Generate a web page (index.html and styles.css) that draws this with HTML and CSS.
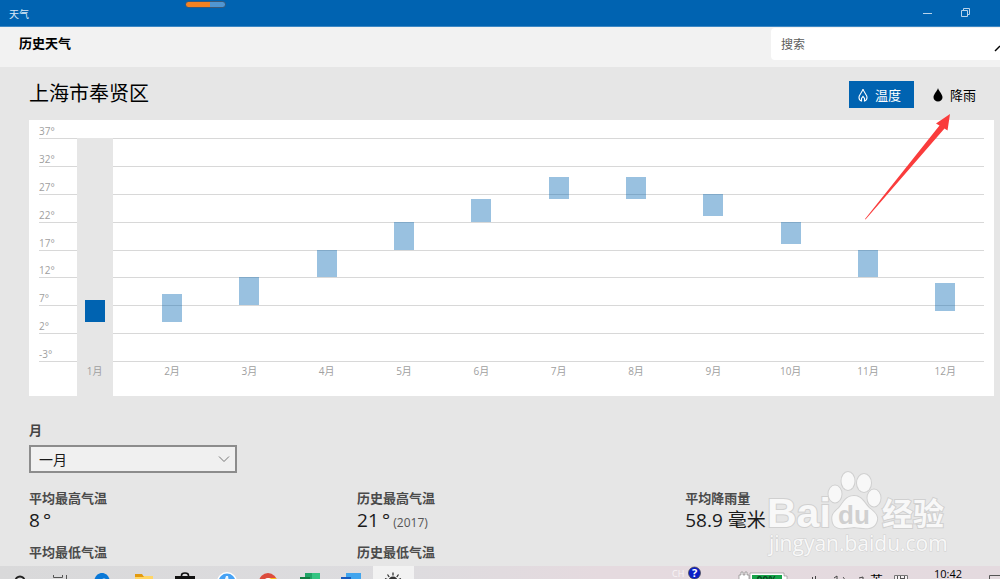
FILE: index.html
```html
<!DOCTYPE html>
<html lang="zh-CN">
<head>
    <meta charset="UTF-8">
    <meta name="viewport" content="width=device-width, initial-scale=1.0">
    <title>天气</title>
    <link rel="stylesheet" href="styles.css">
</head>
<body>
    <div class="titlebar">
        <span class="app-name">天气</span>
        <div class="drag-handle"></div>
        <div class="window-buttons">
            <button aria-label="最小化">
                <svg width="10" height="10" viewBox="0 0 10 10"><path d="M0 5.500h9"/></svg>
            </button>
            <button aria-label="还原">
                <svg width="10" height="10" viewBox="0 0 10 10"><path d="M.5 2.500h6v6h-6zM2.500 2V.5h6v6H7"/></svg>
            </button>
        </div>
    </div>

    <header>
        <h1>历史天气</h1>
        <div class="search">
            <input type="text" placeholder="搜索" aria-label="搜索">
            <svg width="6" height="16" viewBox="0 0 6 16"><path d="M1 15l5-5"/></svg>
        </div>
    </header>

    <main>
        <div class="location-row">
            <h2>上海市奉贤区</h2>
            <div class="tabs">
                <button class="tab active">
                    <svg width="12" height="16" viewBox="0 0 12 16"><path d="M6 2C5.500 5 2 7.500 2 10.500c0 1.800 1 3 2.500 3.500V11.500L6 9.500l1.500 2V14C9 13.500 10 12.300 10 10.500 10 7.500 6.500 5 6 2z" fill="none" stroke="#fff" stroke-width="1.100"/></svg>
                    温度
                </button>
                <button class="tab">
                    <svg width="12" height="16" viewBox="0 0 12 16"><path d="M6 1C5.300 4 1.500 7 1.500 10.300a4.500 4.300 0 0 0 9 0C10.500 7 6.700 4 6 1z"/></svg>
                    降雨
                </button>
            </div>
        </div>

        <div class="chart">
            <ul class="axis">
                <li>37°</li>
                <li>32°</li>
                <li>27°</li>
                <li>22°</li>
                <li>17°</li>
                <li>12°</li>
                <li>7°</li>
                <li>2°</li>
                <li>-3°</li>
            </ul>
            <!-- one grid row per degree, from 37° down to -3° -->
            <div class="months">
                <div class="month selected"><div class="plot"><div class="bar" style="grid-row: 30 / 34"></div></div><span>1月</span></div>
                <div class="month"><div class="plot"><div class="bar" style="grid-row: 29 / 34"></div></div><span>2月</span></div>
                <div class="month"><div class="plot"><div class="bar" style="grid-row: 26 / 31"></div></div><span>3月</span></div>
                <div class="month"><div class="plot"><div class="bar" style="grid-row: 21 / 26"></div></div><span>4月</span></div>
                <div class="month"><div class="plot"><div class="bar" style="grid-row: 16 / 21"></div></div><span>5月</span></div>
                <div class="month"><div class="plot"><div class="bar" style="grid-row: 12 / 16"></div></div><span>6月</span></div>
                <div class="month"><div class="plot"><div class="bar" style="grid-row: 8 / 12"></div></div><span>7月</span></div>
                <div class="month"><div class="plot"><div class="bar" style="grid-row: 8 / 12"></div></div><span>8月</span></div>
                <div class="month"><div class="plot"><div class="bar" style="grid-row: 11 / 15"></div></div><span>9月</span></div>
                <div class="month"><div class="plot"><div class="bar" style="grid-row: 16 / 20"></div></div><span>10月</span></div>
                <div class="month"><div class="plot"><div class="bar" style="grid-row: 21 / 26"></div></div><span>11月</span></div>
                <div class="month"><div class="plot"><div class="bar" style="grid-row: 27 / 32"></div></div><span>12月</span></div>
            </div>
        </div>

        <div class="month-picker">
            <label for="month">月</label>
            <div class="select-box">
                <select id="month">
                    <option>一月</option>
                </select>
                <svg width="12" height="8" viewBox="0 0 12 8"><path d="M1 1.500l5 5 5-5"/></svg>
            </div>
        </div>

        <dl class="stats">
            <div>
                <dt>平均最高气温</dt>
                <dd>8&thinsp;°</dd>
            </div>
            <div>
                <dt>历史最高气温</dt>
                <dd>21&thinsp;°&thinsp;<small>(2017)</small></dd>
            </div>
            <div>
                <dt>平均降雨量</dt>
                <dd>58.9 毫米</dd>
            </div>
            <div>
                <dt>平均最低气温</dt>
            </div>
            <div>
                <dt>历史最低气温</dt>
            </div>
        </dl>
    </main>

    <footer class="taskbar">
        <nav class="apps">
            <a href="#" aria-label="搜索">
                <svg width="24" height="24" viewBox="0 0 24 24"><circle cx="11" cy="15" r="4.500" fill="none" stroke="#222" stroke-width="2"/></svg>
            </a>
            <a href="#" aria-label="任务视图">
                <svg width="24" height="24" viewBox="0 0 24 24"><path d="M3.500 9v2.500h9V9M16.500 9v12M3.500 14.500h9v6h-9z" fill="none" stroke="#555"/></svg>
            </a>
            <a href="#" aria-label="Edge">
                <svg width="24" height="24" viewBox="0 0 24 24"><path d="M3 17c0-6 3.500-10 8-10s8 4 8 10z" fill="#0a78d7"/><path d="M9.500 16c0-2 1.500-3.500 3.500-3.500s3.500 1.500 3.500 3.500z" fill="#fff"/></svg>
            </a>
            <a href="#" aria-label="文件">
                <svg width="24" height="24" viewBox="0 0 24 24"><path d="M2 10h18v10H2z" fill="#ffd666"/><path d="M2 8h7l2 3H2z" fill="#e29a10"/></svg>
            </a>
            <a href="#" aria-label="商店">
                <svg width="24" height="24" viewBox="0 0 24 24"><path d="M1 10h20v10H1z" fill="#111"/><path d="M7.500 12V9.500c0-1.500 1.500-2.500 3.500-2.500s3.500 1 3.500 2.500V12" fill="none" stroke="#111" stroke-width="1.600"/></svg>
            </a>
            <a href="#" aria-label="浏览器">
                <svg width="24" height="24" viewBox="0 0 24 24"><circle cx="11" cy="16" r="10" fill="#fff"/><circle cx="11" cy="16" r="8.500" fill="#46a2f5"/><path d="M10 10h2l1 6H8z" fill="#eaf5ff"/></svg>
            </a>
            <a href="#" aria-label="Chrome">
                <svg width="24" height="24" viewBox="0 0 24 24"><circle cx="11" cy="16" r="9" fill="#dc4c3e"/><path d="M11 12h8c1 2 1 6 0 8h-8z" fill="#fbc116"/><circle cx="11" cy="16" r="4" fill="#fff"/></svg>
            </a>
            <a href="#" aria-label="Excel">
                <svg width="24" height="24" viewBox="0 0 24 24"><path d="M7 7h7v12H7z" fill="#20a366"/><path d="M14 7h8v12h-8z" fill="#33c481"/><path d="M2 11h10v9H2z" fill="#107c41"/></svg>
            </a>
            <a href="#" aria-label="Word">
                <svg width="24" height="24" viewBox="0 0 24 24"><path d="M6 7h15v12H6z" fill="#41a5ee"/><path d="M1 11h10v9H1z" fill="#185abd"/></svg>
            </a>
            <a href="#" class="current" aria-label="天气">
                <svg width="24" height="24" viewBox="0 0 24 24"><circle cx="12" cy="15" r="4.500" fill="#333"/><path d="M12 6.500v3M6.500 8.500l1.700 2.500M17.500 8.500l-1.700 2.500M4 12.500l2.500 1M20 12.500l-2.500 1" stroke="#333" stroke-width="1.300"/></svg>
            </a>
        </nav>
        <div class="tray">
            <span class="lang">CH</span>
            <svg width="14" height="14" viewBox="0 0 14 14"><circle cx="6.500" cy="7" r="6" fill="#0a1ec8" stroke="#444" stroke-width=".7"/><text x="6.500" y="11" text-anchor="middle" font-size="11" font-weight="bold" fill="#fff">?</text></svg>
            <svg class="battery" width="50" height="24" viewBox="0 0 50 24"><path d="M1 9h2V6h2v3h2V6h2v3h2v8H1z" fill="#fff" stroke="#777" stroke-width=".6"/><path d="M12 7h34v3h3v8h-3v4H12z" fill="#fff" stroke="#888" stroke-width=".6"/><path d="M14 9h30v12H14z" fill="#16a34a"/><text x="29" y="18" text-anchor="middle" font-size="10" font-weight="bold" fill="#064a1e">99%</text></svg>
            <svg width="62" height="24" viewBox="0 0 62 24"><path d="M4.500 11v6M7.500 10v7M26 12l3-2v7M35 11c2 2 2 4 0 6M51 12l4-1v5" fill="none" stroke="#444"/></svg>
            <span class="ime">英</span>
            <svg width="14" height="24" viewBox="0 0 14 24"><path d="M.5 9.500h13v9H.5z" fill="#f5f0f2" stroke="#777"/><path d="M3.500 10v3M6.500 10v3M10.500 10v3M6.500 12.500h4" stroke="#555"/></svg>
            <time>10:42</time>
            <svg width="11" height="24" viewBox="0 0 11 24"><path d="M11 9.500H.5v11H11" fill="none" stroke="#555"/></svg>
        </div>
    </footer>

    <svg class="arrow" width="90" height="108" viewBox="0 0 90 108"><path d="M2 106L76.500 12.500 73 10.500 87 1 84.500 17.500 81.500 15.500 2.500 106.500z" fill="#fa3c3c"/></svg>

    <svg class="watermark" width="184" height="94" viewBox="0 0 184 94">
        <g class="mark">
            <text x="1" y="57" class="brand">Bai</text>
            <ellipse cx="82" cy="11" rx="6.500" ry="9"/>
            <ellipse cx="98" cy="13" rx="7" ry="9"/>
            <ellipse cx="69" cy="24" rx="6.500" ry="8.500"/>
            <ellipse cx="108" cy="28" rx="6.500" ry="8.500"/>
            <path d="M88 26c8 0 10 7 15 12 7 5 10 9 7 15-3 6-9 6-22 4-13 2-19 2-21-4-2-7 0-10 6-15 5-6 7-12 15-12z"/>
            <text x="116" y="55" class="name">经验</text>
            <text x="3" y="81" class="site">jingyan.baidu.com</text>
        </g>
        <text x="88" y="54" text-anchor="middle" class="du">du</text>
    </svg>
</body>
</html>
```

FILE: styles.css
```css
:root {
    --accent-color: #0063b1;
    --page-color: #e6e6e6;
    --header-color: #f2f2f2;
    --muted-color: #a0a0a0;
    --line-color: #d8d8d8;
}

* {
    margin: 0;
    padding: 0;
    box-sizing: border-box;
}

body {
    display: flex;
    flex-direction: column;
    position: relative;
    height: 100vh;
    overflow: hidden;
    font-family: "Open Sans", "Noto Sans CJK SC", sans-serif;
    font-size: 13px;
    color: #000;
    background-color: var(--page-color);
}

button {
    border: none;
    background: none;
    font: inherit;
    color: inherit;
}

svg {
    display: block;
}

.titlebar {
    display: flex;
    justify-content: space-between;
    align-items: center;
    flex: none;
    height: 27px;
    padding: 0 29px 0 9px;
    background-color: var(--accent-color);
    border-bottom: 1px solid #3d88c4;
    color: #dbe9f5;
}

.app-name {
    font-size: 10px;
}

.drag-handle {
    position: absolute;
    top: 1px;
    left: 185px;
    width: 41px;
    height: 7px;
    border: 1px solid #3c5a78;
    border-radius: 4px;
    background: linear-gradient(to right, #f58220 62%, #5096d2 62%);
}

.window-buttons {
    display: flex;
    gap: 28px;
}

.window-buttons path {
    fill: none;
    stroke: #b8d3ea;
}

header {
    display: flex;
    justify-content: space-between;
    align-items: flex-start;
    flex: none;
    height: 40px;
    padding-top: 1px;
    padding-left: 19px;
    background-color: var(--header-color);
}

h1 {
    font-size: 13px;
    font-weight: 700;
    line-height: 30px;
}

.search {
    display: flex;
    align-items: center;
    width: 229px;
    height: 32px;
    padding-left: 10px;
    border-radius: 4px 0 0 4px;
    background-color: #fff;
}

.search input {
    flex: 1;
    min-width: 0;
    border: none;
    outline: none;
    background: none;
    font: inherit;
    font-size: 12px;
}

.search input::placeholder {
    color: #5c5c5c;
}

.search path {
    stroke: #000;
    stroke-width: 1.5;
}

main {
    flex: 1;
    min-height: 0;
    overflow: hidden;
    padding: 14px 6px 0 29px;
}

.location-row {
    display: flex;
    justify-content: space-between;
    height: 27px;
    margin-bottom: 12px;
}

h2 {
    font-size: 20px;
    font-weight: 400;
    line-height: 26px;
}

.tabs {
    display: flex;
    gap: 10px;
    padding-right: 18px;
}

.tab {
    display: flex;
    align-items: center;
    gap: 6px;
    height: 27px;
    padding: 0 0 0 8px;
    line-height: 20px;
}

.tab.active {
    padding-right: 13px;
    background-color: var(--accent-color);
    color: #fff;
}

/* axis lines and month columns share one grid cell */
.chart {
    display: grid;
    height: 276px;
    background-color: #fff;
}

.axis,
.months {
    grid-area: 1 / 1;
}

.axis {
    display: grid;
    grid-template-rows: 19px repeat(8, 1fr);
    height: 242px;
    padding: 0 10px;
    list-style: none;
    font-size: 10px;
    color: var(--muted-color);
}

.axis li {
    display: flex;
    align-items: flex-end;
    line-height: 14px;
    border-bottom: 1px solid var(--line-color);
}

.months {
    display: grid;
    grid-template-columns: repeat(12, 1fr);
    padding: 18px 10px 0 27px;
}

.month {
    justify-self: center;
    width: 36px;
    font-size: 10px;
    line-height: 20px;
    text-align: center;
    color: var(--muted-color);
}

.month.selected {
    background-color: var(--page-color);
}

.plot {
    display: grid;
    grid-template-rows: repeat(40, 1fr);
    justify-content: center;
    height: 223px;
}

.bar {
    width: 20px;
    background-color: rgba(0, 99, 177, 0.4);
}

.selected .bar {
    background-color: var(--accent-color);
}

.month-picker {
    width: 208px;
    margin-top: 24px;
}

.month-picker label {
    display: block;
    line-height: 20px;
    margin-bottom: 5px;
    font-weight: 700;
    color: #444;
}

.select-box {
    display: grid;
    align-items: center;
}

.select-box select,
.select-box svg {
    grid-area: 1 / 1;
}

.select-box select {
    appearance: none;
    height: 28px;
    padding: 0 8px;
    border: 2px solid #8c8c8c;
    background-color: #f0f0f0;
    font: inherit;
    font-size: 14px;
    color: #1a1a1a;
}

.select-box svg {
    justify-self: end;
    margin-right: 7px;
    pointer-events: none;
}

.select-box path {
    fill: none;
    stroke: #777;
}

.stats {
    display: grid;
    grid-template-columns: 34% 34% 1fr;
    row-gap: 10px;
    margin-top: 15px;
}

.stats dt {
    line-height: 20px;
    font-weight: 700;
    color: #4a4a4a;
}

.stats dd {
    font-size: 19px;
    line-height: 24px;
    color: #1a1a1a;
}

.stats small {
    font-size: 12px;
    line-height: 16px;
    color: #555;
}

.taskbar {
    display: flex;
    justify-content: space-between;
    flex: none;
    height: 13px;
    overflow: hidden;
    background: linear-gradient(to right, #d9d9da, #dddcdf 40%, #e5dadf 60%, #e4dadf);
}

.apps {
    display: grid;
    grid-template-columns: repeat(10, 1fr);
    width: 414px;
}

.apps a {
    display: flex;
    justify-content: center;
}

.apps .current {
    background-color: #f2f2f2;
}

.tray {
    display: grid;
    grid-template-columns: 16px 50px 70px 62px 24px 40px 55px 11px;
    align-items: start;
    font-size: 11px;
    line-height: 16px;
}

.lang {
    font-size: 9px;
    color: #f8f4f6;
}

.ime {
    font-size: 13px;
    line-height: 28px;
}

.arrow {
    position: absolute;
    top: 113px;
    left: 863px;
}

.watermark {
    position: absolute;
    right: 50px;
    bottom: 15px;
}

.mark {
    fill: #f8f8f8;
    stroke: #d0d0d0;
    stroke-width: 2;
    paint-order: stroke;
}

.brand {
    font-family: "Liberation Sans", sans-serif;
    font-size: 41px;
    font-weight: 700;
}

.name {
    font-size: 31px;
    font-weight: 700;
}

.site {
    font-size: 21px;
    stroke-width: 1;
}

.du {
    font-family: "Liberation Sans", sans-serif;
    font-size: 26px;
    font-weight: 700;
    fill: #d0d0d0;
}
```
